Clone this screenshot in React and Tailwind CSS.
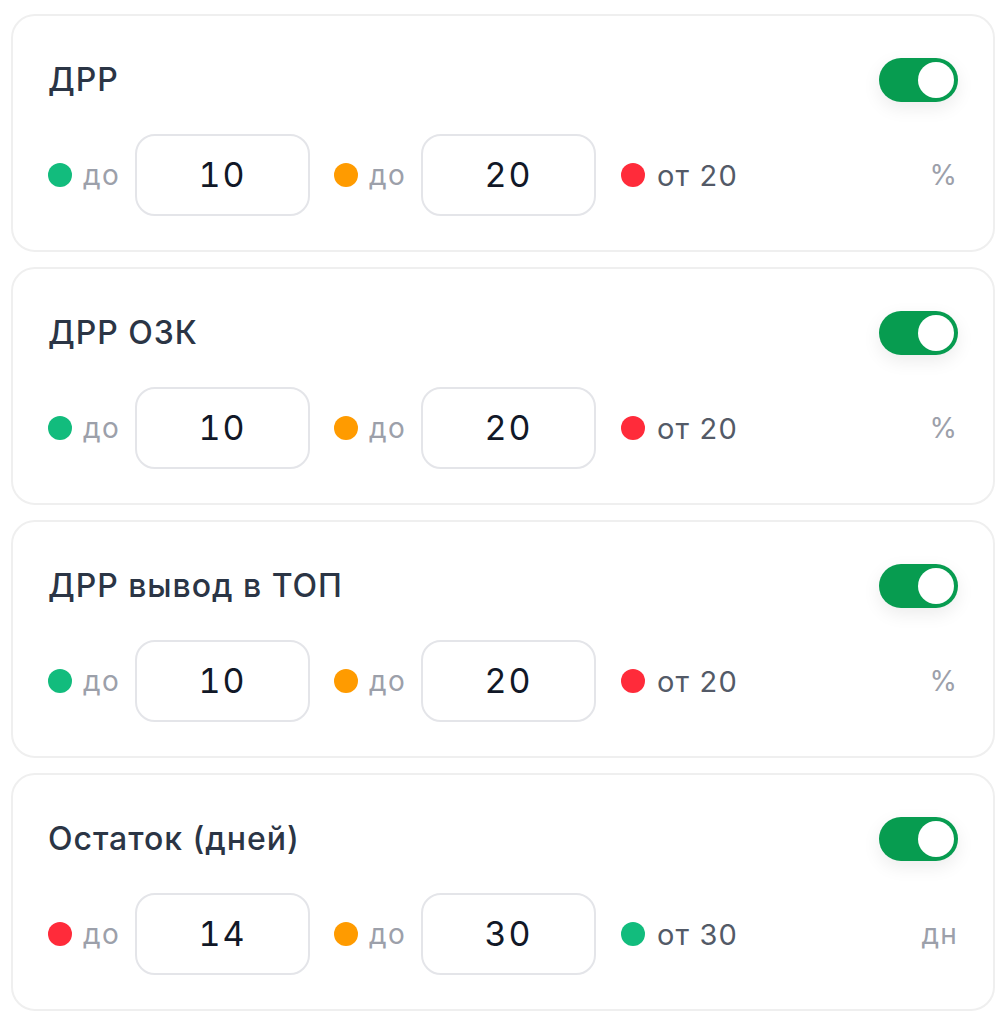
const metrics = [
  { title: "ДРР", low: "10", mid: "20", lowColor: "bg-[#12bc7d]", highColor: "bg-[#ff2b3a]", high: "от 20", unit: "%" },
  { title: "ДРР ОЗК", low: "10", mid: "20", lowColor: "bg-[#12bc7d]", highColor: "bg-[#ff2b3a]", high: "от 20", unit: "%" },
  { title: "ДРР вывод в ТОП", low: "10", mid: "20", lowColor: "bg-[#12bc7d]", highColor: "bg-[#ff2b3a]", high: "от 20", unit: "%" },
  { title: "Остаток (дней)", low: "14", mid: "30", lowColor: "bg-[#ff2b3a]", highColor: "bg-[#12bc7d]", high: "от 30", unit: "дн" },
];

function Toggle() {
  return (
    <div className="flex h-[44px] w-[79px] shrink-0 items-center justify-end rounded-full bg-[#079c50] p-[4px] shadow-[0_6px_18px_rgba(0,0,0,0.08)]">
      <div className="h-[36px] w-[36px] rounded-full bg-white" />
    </div>
  );
}

function ValueBox({ value }) {
  return (
    <div className="flex h-[82px] w-[175px] shrink-0 items-center justify-center rounded-[20px] border-[2.5px] border-[#e4e5e9] bg-white text-[34px] leading-none tracking-[0.06em] tabular-nums text-[#111827]">
      {value}
    </div>
  );
}

function Label({ children }) {
  return <span className="ml-[11px] w-[40px] text-[28px] leading-none tracking-[0.05em] text-[#9ca0aa]">{children}</span>;
}

function MetricCard({ m }) {
  return (
    <div className="rounded-[24px] border-2 border-[#efefef] bg-white pl-[35px] pr-[35px] pt-[42px] pb-[34px]">
      <div className="flex h-[44px] items-center justify-between">
        <p className="text-[32px] font-medium leading-none tracking-[0.03em] text-[#2b3545]">{m.title}</p>
        <Toggle />
      </div>
      <div className="mt-[32px] flex h-[82px] items-center">
        <span className={`h-[24px] w-[24px] shrink-0 rounded-full ${m.lowColor}`} />
        <Label>до</Label>
        <div className="ml-[12px]">
          <ValueBox value={m.low} />
        </div>
        <span className="ml-[24px] h-[24px] w-[24px] shrink-0 rounded-full bg-[#ff9b00]" />
        <Label>до</Label>
        <div className="ml-[12px]">
          <ValueBox value={m.mid} />
        </div>
        <span className={`ml-[25px] h-[24px] w-[24px] shrink-0 rounded-full ${m.highColor}`} />
        <span className="ml-[12px] text-[29px] leading-none tracking-[0.04em] text-[#535a67]">{m.high}</span>
        <span className="ml-auto text-[28px] leading-none tracking-[0.04em] text-[#9ca0aa]">{m.unit}</span>
      </div>
    </div>
  );
}

export default function App() {
  return (
    <div className="min-h-screen bg-white pl-[11px] pr-[13px] pt-[14px] font-['Inter',sans-serif]">
      <div className="flex flex-col gap-[15px]">
        {metrics.map((m) => (
          <MetricCard key={m.title} m={m} />
        ))}
      </div>
    </div>
  );
}
